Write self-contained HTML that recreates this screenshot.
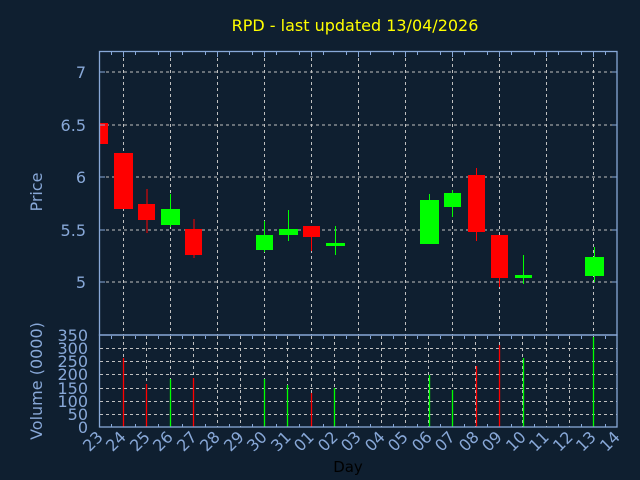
<!DOCTYPE html>
<html><head><meta charset="utf-8"><style>
html,body{margin:0;padding:0;background:#0f1f30;}
svg{display:block;font-family:"DejaVu Sans","Liberation Sans",sans-serif;}
</style></head><body>
<svg width="640" height="480" viewBox="0 0 640 480" xmlns="http://www.w3.org/2000/svg">
<rect width="640" height="480" fill="#0f1f30"/>
<text x="355" y="31" fill="#ffff00" font-size="16" text-anchor="middle">RPD - last updated 13/04/2026</text>
<g stroke="#c0c0c0" stroke-width="1" stroke-dasharray="3,3">
<line x1="100" y1="72" x2="617" y2="72"/>
<line x1="100" y1="125" x2="617" y2="125"/>
<line x1="100" y1="177" x2="617" y2="177"/>
<line x1="100" y1="230" x2="617" y2="230"/>
<line x1="100" y1="282" x2="617" y2="282"/>
<line x1="123.5" y1="52" x2="123.5" y2="335"/><line x1="170.5" y1="52" x2="170.5" y2="335"/>
<line x1="217.5" y1="52" x2="217.5" y2="335"/><line x1="264.5" y1="52" x2="264.5" y2="335"/>
<line x1="311.5" y1="52" x2="311.5" y2="335"/><line x1="358.5" y1="52" x2="358.5" y2="335"/>
<line x1="405.5" y1="52" x2="405.5" y2="335"/><line x1="452.5" y1="52" x2="452.5" y2="335"/>
<line x1="499.5" y1="52" x2="499.5" y2="335"/><line x1="546.5" y1="52" x2="546.5" y2="335"/>
<line x1="593.5" y1="52" x2="593.5" y2="335"/>
<line x1="100" y1="348.5" x2="617" y2="348.5"/><line x1="100" y1="361.5" x2="617" y2="361.5"/>
<line x1="100" y1="374.5" x2="617" y2="374.5"/><line x1="100" y1="388.5" x2="617" y2="388.5"/>
<line x1="100" y1="401.5" x2="617" y2="401.5"/><line x1="100" y1="414.5" x2="617" y2="414.5"/>
</g>
<g stroke="#c0c0c0" stroke-width="1" stroke-dasharray="3,3" id="vg"></g>
<g stroke="#c0c0c0" stroke-dasharray="3,3">
<line x1="123.5" y1="336" x2="123.5" y2="427"/><line x1="146.5" y1="336" x2="146.5" y2="427"/>
<line x1="170.5" y1="336" x2="170.5" y2="427"/><line x1="193.5" y1="336" x2="193.5" y2="427"/>
<line x1="217.5" y1="336" x2="217.5" y2="427"/><line x1="240.5" y1="336" x2="240.5" y2="427"/>
<line x1="264.5" y1="336" x2="264.5" y2="427"/><line x1="287.5" y1="336" x2="287.5" y2="427"/>
<line x1="311.5" y1="336" x2="311.5" y2="427"/><line x1="334.5" y1="336" x2="334.5" y2="427"/>
<line x1="358.5" y1="336" x2="358.5" y2="427"/><line x1="381.5" y1="336" x2="381.5" y2="427"/>
<line x1="405.5" y1="336" x2="405.5" y2="427"/><line x1="428.5" y1="336" x2="428.5" y2="427"/>
<line x1="452.5" y1="336" x2="452.5" y2="427"/><line x1="475.5" y1="336" x2="475.5" y2="427"/>
<line x1="499.5" y1="336" x2="499.5" y2="427"/><line x1="522.5" y1="336" x2="522.5" y2="427"/>
<line x1="546.5" y1="336" x2="546.5" y2="427"/><line x1="569.5" y1="336" x2="569.5" y2="427"/>
<line x1="593.5" y1="336" x2="593.5" y2="427"/>
</g>
<!-- candles -->
<g fill="#ff0000" stroke="#ff0000" stroke-width="1">
<rect x="100" y="123" width="8" height="21" stroke="none"/>
<rect x="114" y="153" width="19" height="56" stroke="none"/>
<line x1="147" y1="189" x2="147" y2="233"/><rect x="138" y="204" width="17" height="16" stroke="none"/>
<line x1="194" y1="219" x2="194" y2="258"/><rect x="185" y="229" width="17" height="26" stroke="none"/>
<line x1="311.5" y1="226" x2="311.5" y2="251"/><rect x="303" y="226" width="17" height="11" stroke="none"/>
<line x1="476.5" y1="168" x2="476.5" y2="241"/><rect x="468" y="175" width="17" height="57" stroke="none"/>
<line x1="499.5" y1="235" x2="499.5" y2="287"/><rect x="491" y="235" width="17" height="43" stroke="none"/>
</g>
<g fill="#00ff00" stroke="#00ff00" stroke-width="1">
<line x1="170.5" y1="194" x2="170.5" y2="227"/><rect x="161" y="209" width="19" height="16" stroke="none"/>
<line x1="264.5" y1="221" x2="264.5" y2="252"/><rect x="256" y="235" width="17" height="15" stroke="none"/>
<line x1="288.5" y1="210" x2="288.5" y2="241"/><rect x="279" y="229" width="19" height="6" stroke="none"/>
<line x1="335.5" y1="226" x2="335.5" y2="255"/><rect x="326" y="243" width="19" height="3" stroke="none"/>
<line x1="429.5" y1="194" x2="429.5" y2="244"/><rect x="420" y="200" width="19" height="44" stroke="none"/>
<line x1="452.5" y1="190" x2="452.5" y2="217"/><rect x="444" y="193" width="17" height="14" stroke="none"/>
<line x1="523.5" y1="255" x2="523.5" y2="284"/><rect x="515" y="275" width="17" height="3" stroke="none"/>
<line x1="594.5" y1="247" x2="594.5" y2="282"/><rect x="585" y="257" width="19" height="19" stroke="none"/>
</g>
<!-- volume -->
<g stroke-width="1.3">
<line x1="123.5" y1="358" x2="123.5" y2="427" stroke="#ff0000"/>
<line x1="146.5" y1="384" x2="146.5" y2="427" stroke="#ff0000"/>
<line x1="170.5" y1="379" x2="170.5" y2="427" stroke="#00ff00"/>
<line x1="193.5" y1="378" x2="193.5" y2="427" stroke="#ff0000"/>
<line x1="264.5" y1="379" x2="264.5" y2="427" stroke="#00ff00"/>
<line x1="287.5" y1="385" x2="287.5" y2="427" stroke="#00ff00"/>
<line x1="311.5" y1="393" x2="311.5" y2="427" stroke="#ff0000"/>
<line x1="334.5" y1="388" x2="334.5" y2="427" stroke="#00ff00"/>
<line x1="429.5" y1="375" x2="429.5" y2="427" stroke="#00ff00"/>
<line x1="452.5" y1="390" x2="452.5" y2="427" stroke="#00ff00"/>
<line x1="476.5" y1="366" x2="476.5" y2="427" stroke="#ff0000"/>
<line x1="499.5" y1="345" x2="499.5" y2="427" stroke="#ff0000"/>
<line x1="523.5" y1="358" x2="523.5" y2="427" stroke="#00ff00"/>
<line x1="593.5" y1="337" x2="593.5" y2="427" stroke="#00ff00"/>
</g>
<!-- frames -->
<g stroke="#88a8d8" fill="none" stroke-width="1.3">
<rect x="99.5" y="51.5" width="517.5" height="283.5"/>
<rect x="99.5" y="335" width="517.5" height="92"/>
</g>
<g stroke="#88a8d8" stroke-width="1">
<path d="M111.5 52v3M135.5 52v3M158.5 52v3M182.5 52v3M205.5 52v3M229.5 52v3M252.5 52v3M276.5 52v3M299.5 52v3M323.5 52v3M346.5 52v3M370.5 52v3M393.5 52v3M417.5 52v3M440.5 52v3M464.5 52v3M487.5 52v3M511.5 52v3M534.5 52v3M558.5 52v3M581.5 52v3M605.5 52v3"/>
<path d="M123.5 52v5M170.5 52v5M217.5 52v5M264.5 52v5M311.5 52v5M358.5 52v5M405.5 52v5M452.5 52v5M499.5 52v5M546.5 52v5M593.5 52v5"/>
<path d="M111.5 336v3M135.5 336v3M158.5 336v3M182.5 336v3M205.5 336v3M229.5 336v3M252.5 336v3M276.5 336v3M299.5 336v3M323.5 336v3M346.5 336v3M370.5 336v3M393.5 336v3M417.5 336v3M440.5 336v3M464.5 336v3M487.5 336v3M511.5 336v3M534.5 336v3M558.5 336v3M581.5 336v3M605.5 336v3"/>
<path d="M111.5 427v-3M135.5 427v-3M158.5 427v-3M182.5 427v-3M205.5 427v-3M229.5 427v-3M252.5 427v-3M276.5 427v-3M299.5 427v-3M323.5 427v-3M346.5 427v-3M370.5 427v-3M393.5 427v-3M417.5 427v-3M440.5 427v-3M464.5 427v-3M487.5 427v-3M511.5 427v-3M534.5 427v-3M558.5 427v-3M581.5 427v-3M605.5 427v-3"/>
<path d="M100 72h5M100 125h5M100 177h5M100 230h5M100 282h5M612 72h5M612 125h5M612 177h5M612 230h5M612 282h5"/>
</g>
<g fill="#88a8d8" font-size="16" text-anchor="end">
<text x="86" y="78">7</text><text x="86" y="131">6.5</text><text x="86" y="183">6</text>
<text x="86" y="236">5.5</text><text x="86" y="288">5</text>
<text x="88" y="341">350</text><text x="88" y="354">300</text><text x="88" y="367">250</text>
<text x="88" y="380">200</text><text x="88" y="394">150</text><text x="88" y="407">100</text>
<text x="88" y="420">50</text><text x="88" y="433">0</text>
</g>
<g fill="#88a8d8" font-size="16" text-anchor="middle">
<text transform="translate(42,192) rotate(-90)">Price</text>
<text transform="translate(42,381) rotate(-90)">Volume (0000)</text>
</g>
<g fill="#88a8d8" font-size="16" text-anchor="end">
<text transform="translate(104,438) rotate(-45)">23</text>
<text transform="translate(127,438) rotate(-45)">24</text>
<text transform="translate(151,438) rotate(-45)">25</text>
<text transform="translate(174,438) rotate(-45)">26</text>
<text transform="translate(198,438) rotate(-45)">27</text>
<text transform="translate(221,438) rotate(-45)">28</text>
<text transform="translate(245,438) rotate(-45)">29</text>
<text transform="translate(268,438) rotate(-45)">30</text>
<text transform="translate(292,438) rotate(-45)">31</text>
<text transform="translate(315,438) rotate(-45)">01</text>
<text transform="translate(339,438) rotate(-45)">02</text>
<text transform="translate(362,438) rotate(-45)">03</text>
<text transform="translate(386,438) rotate(-45)">04</text>
<text transform="translate(409,438) rotate(-45)">05</text>
<text transform="translate(433,438) rotate(-45)">06</text>
<text transform="translate(456,438) rotate(-45)">07</text>
<text transform="translate(480,438) rotate(-45)">08</text>
<text transform="translate(503,438) rotate(-45)">09</text>
<text transform="translate(527,438) rotate(-45)">10</text>
<text transform="translate(550,438) rotate(-45)">11</text>
<text transform="translate(574,438) rotate(-45)">12</text>
<text transform="translate(597,438) rotate(-45)">13</text>
<text transform="translate(621,438) rotate(-45)">14</text>
</g>
<text x="348" y="472" fill="#000000" font-size="15" text-anchor="middle">Day</text>
</svg>
</body></html>
